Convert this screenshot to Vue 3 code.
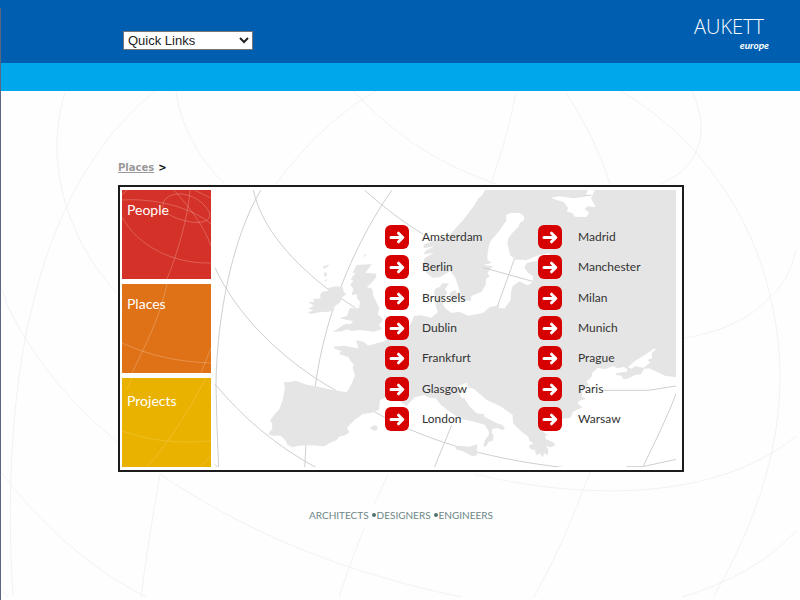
<script setup>
const tiles = [
  { name: 'People', tone: 'people', lines: ['M0 10C35 8 70 18 89 34', 'M41 14C44 2 64 0 79 12C97 28 84 34 69 32C52 29 39 22 41 14', 'M52 0C68 18 82 36 89 56', 'M68 0C66 27 56 62 45 89', 'M0 27C15 55 50 74 89 73', 'M72 0L89 8', 'M0 5L5 0'] },
  { name: 'Places', tone: 'places', lines: ['M45 0C38 34 22 64 10 89', 'M0 59C28 72 58 78 89 79', 'M89 64L79 89'] },
  { name: 'Projects', tone: 'projects', lines: ['M84 0C66 34 46 66 25 89', 'M0 53C28 63 58 66 89 63', 'M5 11L10 0', 'M89 77L79 89'] }
]
const columns = [
  ['Amsterdam', 'Berlin', 'Brussels', 'Dublin', 'Frankfurt', 'Glasgow', 'London'],
  ['Madrid', 'Manchester', 'Milan', 'Munich', 'Prague', 'Paris', 'Warsaw']
]
const globe = [
  'M65 93C42 165 71 245 117 293', 'M155 91C91 143 53 220 34 300C10 390 7 505 13 596',
  'M176 91C180 125 201 162 225 184', 'M353 91C402 142 443 165 496 184',
  'M376 91C338 113 304 146 276 184', 'M516 93Q507 138 491 184',
  'M566 93Q596 138 610 184', 'M621 91C699 137 753 215 771 300C797 410 763 510 714 596',
  'M692 91C711 132 700 168 660 184', 'M796 250Q789 283 767 300',
  'M685 338Q739 329 769 299', 'M5 300C29 354 74 408 118 442',
  'M2 473C36 520 92 570 146 597', 'M160 474Q147 548 141 597',
  'M160 474C236 526 337 572 462 597', 'M388 474Q359 535 339 597',
  'M474 474C611 506 728 492 796 436', 'M590 472Q564 544 534 597',
  'M682 597Q754 576 796 531', 'M2 289L6 300', 'M2 590L8 597'
]
</script>

<template>
  <div class="page">
    <svg class="globe" width="800" height="600" viewBox="0 0 800 600" aria-hidden="true">
      <path v-for="d in globe" :key="d" :d="d" />
    </svg>

    <header class="masthead">
      <select class="quick" aria-label="Quick Links">
        <option>Quick Links</option>
      </select>
      <a class="logo" href="#"><span class="logo-name">AUKETT</span><span class="logo-sub">europe</span></a>
    </header>
    <div class="band"></div>

    <main class="content">
      <nav class="crumbs"><a href="#">Places</a><span>&gt;</span></nav>

      <section class="panel">
        <nav class="tiles">
          <a v-for="t in tiles" :key="t.name" href="#" class="tile" :class="t.tone">
            <svg viewBox="0 0 89 89" aria-hidden="true"><path v-for="d in t.lines" :key="d" :d="d" /></svg>
            <span>{{ t.name }}</span>
          </a>
        </nav>

        <div class="map">
          <svg class="europe" viewBox="12 15 1386 837" preserveAspectRatio="xMinYMin slice" aria-hidden="true">
            <g class="grid">
              <path d="M130 15C155 130 250 235 370 325L435 368" />
              <path d="M153 15C70 150 20 390 18 600Q20 730 26 850" />
              <path d="M463 15C520 65 570 105 640 148" />
              <path d="M546 15C450 150 345 370 315 610" />
              <path d="M15 248C75 380 205 520 380 618" />
              <path d="M15 597C95 695 200 785 323 850" />
              <path d="M288 775L284 850" />
              <path d="M15 838L26 850" />
              <path d="M490 678C620 755 810 820 1065 848" />
              <path d="M725 720L672 850" />
              <path d="M1178 616H1315L1398 603" />
              <path d="M1398 626C1375 690 1330 780 1298 848" />
              <path d="M1250 845H1298L1398 823" />
            </g>
            <g class="land">
              <path d="M825 15L815 33L805 40L796 56L775 85L755 110L742 124L720 150L690 160L660 172L643 178L640 190L673 184L645 199L642 208L672 203L643 220L640 245L650 265L668 278L690 277L720 258L735 275L745 305L752 330L750 345L782 348L784 333L815 320L827 300L828 282L839 273L832 263L848 244L820 240L845 234L832 224L833 202L838 178L844 165L857 151L872 133L882 116L890 107L888 90L902 84L930 84L942 94L942 106L930 113L925 126L906 145L895 160L892 175L897 195L900 210L916 224L950 225L985 211L1020 205L1018 211L991 226L950 234L943 248L955 263L970 275L968 291L953 301L928 289L908 303L903 322L902 345L884 370L864 370L870 361L840 365L819 384L775 392L747 380L725 384L707 371L700 360L697 352L699 340L712 325L705 313L717 295L697 295L690 305L675 312L672 325L678 340L677 363L684 381L664 398L635 391L612 393L606 408L596 426L565 439L540 455L524 469L500 475L474 482L463 471L438 465L445 490L421 486L402 482L370 485L376 492L394 498L387 507L415 516L421 527L431 538L428 549L435 571L425 596L410 622L370 616L315 603L294 600L256 587L245 590L222 592L225 608L218 646L207 674L194 688L180 706L186 716L187 730L175 748L188 752L211 752L225 764L233 780L247 787L265 782L304 781L344 784L360 773L380 766L386 756L407 750L418 742L411 728L434 704L459 687L487 683L507 674L510 645L532 636L560 642L590 663L601 650L615 636L643 630L658 638L677 640L693 660L720 681L752 702L788 709L824 719L835 735L837 748L824 767L820 785L829 783L836 770L848 767L851 752L844 741L848 731L862 729L879 735L885 732L877 720L861 715L821 694L824 688L800 685L780 665L768 648L763 639L756 640L745 623L746 602L771 593L773 606L791 611L830 645L870 663L908 690L909 715L935 740L955 755L958 768L970 774L955 784L963 793L975 795L978 811L991 805L996 818L1004 804L1013 811L1015 793L1007 781L1020 787L1035 781L1032 773L1007 762L1006 750L1018 754L992 735L1000 727L1045 717L1058 701L1082 698L1089 680L1118 667L1103 656L1108 647L1128 642L1115 635L1120 611L1136 598L1129 590L1144 576L1147 563L1163 549L1186 552L1210 543L1222 550L1241 546L1253 553L1250 560L1215 565L1221 571L1235 572L1239 582L1253 581L1273 570L1293 568L1302 551L1317 550L1340 560L1365 572L1398 577V15Z" />
              <path d="M440 240L485 237L475 252L466 263L500 266L497 280L482 296L470 306L487 311L490 333L508 370L503 388L519 403L507 421L517 432L492 440L449 435L425 438L411 433L396 439L368 440L391 426L407 416L422 417L430 408L410 405L389 400L411 392L419 370L447 370L450 351L442 341L440 328L425 330L430 311L421 299L430 286L421 283L436 265L428 263Z" />
              <path d="M355 309L375 304L398 306L401 320L409 328L396 337L391 351L372 366L372 377L353 380L331 381L304 387L293 383L310 376L294 371L311 362L295 351L313 351L308 343L333 340L329 332L336 320L354 318Z" />
              <path d="M735 785L752 782L775 785L803 778L800 792L802 811L787 814L757 798L740 794Z" />
              <path d="M480 728L494 720L504 726L498 738L487 735Z" />
              <path d="M338 245L358 238L353 245L341 252Z M343 262L352 264L348 276L342 272Z M344 286L352 282L346 292Z M461 219L464 206L468 210Z" />
              <path d="M719 323L735 315L748 332L738 347L720 339Z" />
            </g>
            <g class="water">
              <path d="M1023 38L1047 34L1090 40L1126 35L1133 15H1154L1148 30L1143 40L1157 66L1132 64L1124 73L1138 83L1129 96L1094 95L1088 84L1071 80L1074 69L1061 51L1038 44Z" />
              <path d="M1254 546L1275 528L1310 506L1333 490L1338 493L1325 504L1326 519L1313 525L1320 533L1300 549L1276 543L1264 551Z" />
            </g>
            <g class="grid">
              <path d="M913 222L862 365M820 248L968 289M1125 31H1144" />
            </g>
          </svg>
          <div class="cities">
            <ul v-for="(col, i) in columns" :key="i">
              <li v-for="city in col" :key="city">
                <a href="#">
                  <svg class="arrow" viewBox="0 0 24 24" aria-hidden="true">
                    <rect width="24" height="24" rx="6" />
                    <path d="M6 12.5H17M13.5 8.2L17.8 12.5L13.5 16.8" />
                  </svg>
                  <span>{{ city }}</span>
                </a>
              </li>
            </ul>
          </div>
        </div>
      </section>

      <footer class="tagline"><span>ARCHITECTS</span><span><i></i>DESIGNERS</span><span><i></i>ENGINEERS</span></footer>
    </main>
  </div>
</template>

<style>
body {
  margin: 0;
  background: #fefefe;
}
</style>

<style scoped>
.page {
  position: relative;
  box-sizing: border-box;
  min-height: 100vh;
  overflow: hidden;
  font-family: Lato, "Noto Sans", sans-serif;
}
.page::before {
  content: "";
  position: absolute;
  z-index: 2;
  top: 8px;
  bottom: 0;
  left: 0;
  width: 1px;
  background: #5b6680;
}
.globe {
  position: absolute;
  inset: 0;
  width: 100%;
  height: 100%;
}
.globe path {
  fill: none;
  stroke: #f1f3f3;
  stroke-width: 1;
}
.masthead {
  position: relative;
  display: flex;
  justify-content: space-between;
  align-items: flex-start;
  box-sizing: border-box;
  height: 63px;
  padding: 0 31px 0 123px;
  background: #005eb0;
}
.quick {
  width: 130px;
  height: 19px;
  margin-top: 31px;
  padding: 0;
  border: 1px solid #767676;
  border-radius: 0;
  background: #fff;
  color: #222;
  font: 13px/17px "Liberation Sans", Arial, sans-serif;
}
.logo {
  display: flex;
  flex-direction: column;
  width: 75px;
  padding-top: 14px;
  color: #fff;
  text-decoration: none;
}
.logo-name {
  font-family: "Open Sans", "Noto Sans", sans-serif;
  font-size: 20px;
  font-weight: 300;
  line-height: 26px;
}
.logo-sub {
  align-self: flex-end;
  font-size: 10px;
  font-style: italic;
  font-weight: bold;
  line-height: 10px;
}
.band {
  position: relative;
  height: 28px;
  background: #00a7ea;
}
.content {
  position: relative;
  padding: 69px 116px 0 118px;
}
.crumbs {
  display: flex;
  gap: 4px;
  height: 25px;
  font: bold 10px/15px "DejaVu Sans", Verdana, sans-serif;
  color: #111;
}
.crumbs a {
  color: #999;
}
.panel {
  display: flex;
  gap: 3px;
  padding: 3px 6px 3px 2px;
  border: 2px solid #1c1c1c;
  background: #fff;
}
.tiles {
  display: flex;
  flex: none;
  flex-direction: column;
  gap: 5px;
}
.tile {
  position: relative;
  box-sizing: border-box;
  width: 89px;
  height: 89px;
  padding: 10px 5px;
  color: #fff;
  font-size: 14px;
  line-height: 20px;
  text-decoration: none;
}
.tile svg {
  position: absolute;
  inset: 0;
}
.tile path {
  fill: none;
  stroke: #fff;
  stroke-opacity: 0.22;
}
.tile span {
  position: relative;
}
.people {
  background: #d43228;
}
.places {
  background: #df7217;
}
.projects {
  padding-top: 13px;
  background: #eab200;
}
.projects path {
  stroke-opacity: 0.15;
}
.map {
  position: relative;
  flex: 1;
  min-width: 0;
}
.europe {
  position: absolute;
  inset: 0;
  width: 100%;
  height: 100%;
}
.grid path {
  fill: none;
  stroke: #cfcfcf;
  stroke-width: 3;
}
.land path {
  fill: #e5e5e5;
}
.water path {
  fill: #fff;
}
.cities {
  position: relative;
  display: flex;
  gap: 33px;
  padding: 35px 0 0 171px;
}
.cities ul {
  display: flex;
  flex-direction: column;
  justify-content: space-between;
  width: 120px;
  height: 206px;
  margin: 0;
  padding: 0;
  list-style: none;
}
.cities a {
  display: flex;
  align-items: center;
  gap: 13px;
  color: #333;
  font-size: 12px;
  line-height: 24px;
  text-decoration: none;
}
.cities ul + ul a {
  gap: 16px;
}
.arrow {
  flex: none;
  width: 24px;
  height: 24px;
}
.arrow rect {
  fill: #d60000;
}
.arrow path {
  fill: none;
  stroke: #fff;
  stroke-width: 3;
  stroke-linecap: round;
  stroke-linejoin: round;
}
.tagline {
  display: flex;
  justify-content: center;
  gap: 3px;
  width: max-content;
  margin: 31px auto 0;
  padding: 5px;
  background: #fefefe;
  color: #6c8785;
  font-size: 10px;
  line-height: 14px;
}
.tagline span {
  display: flex;
  align-items: center;
  gap: 1px;
}
.tagline i {
  width: 4px;
  height: 4px;
  border-radius: 50%;
  background: #4f7370;
}
</style>
